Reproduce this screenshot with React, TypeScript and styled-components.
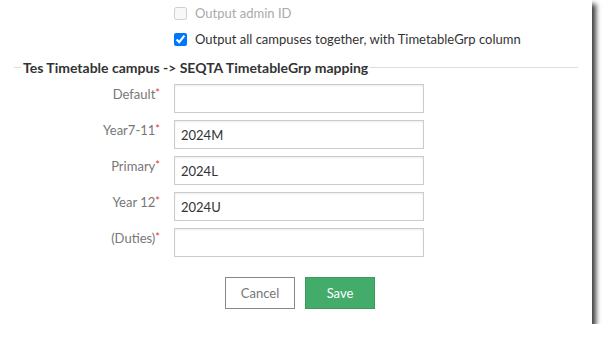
import React from "react";
import styled, { createGlobalStyle } from "styled-components";

const Global = createGlobalStyle`
  html, body { margin: 0; padding: 0; background: #fff; }
  body { font-family: Lato, "Open Sans", sans-serif; }
`;

const Panel = styled.div`
  width: 592px;
  height: 324px;
  background: #fff;
  box-shadow: 4px 4px 5px rgba(0, 0, 0, 0.75);
  box-sizing: border-box;
  padding-top: 4px;
  display: flex;
  flex-direction: column;
`;

const CheckRow = styled.label<{ $disabled?: boolean }>`
  display: flex;
  align-items: center;
  height: 18px;
  margin-bottom: 8px;
  padding-left: 174px;
  font-size: 13px;
  color: ${(p) => (p.$disabled ? "#aaa" : "#333")};
`;

const Box = styled.input`
  width: 13px;
  height: 13px;
  margin: 0 8px 0 0;
  accent-color: #0075ff;
`;

const Legend = styled.div`
  display: flex;
  align-items: center;
  margin: 2px 14px 0 14px;
  height: 18px;
  font-size: 14px;
  font-weight: 700;
  color: #333;
  gap: 2px;
`;

const Rule = styled.span<{ $grow?: boolean }>`
  height: 1px;
  background: #ddd;
  ${(p) => (p.$grow ? "flex: 1;" : "width: 7px;")}
`;

const Form = styled.div`
  display: grid;
  grid-template-columns: 160px 250px;
  column-gap: 14px;
  row-gap: 7px;
  margin-top: 8px;
`;

const Label = styled.div`
  text-align: right;
  font-size: 13px;
  color: #777;
  padding-top: 1px;
  line-height: 18px;
`;

const Star = styled.span`
  color: #e0402e;
  font-size: 11px;
  vertical-align: top;
  position: relative;
  top: -1px;
`;

const Field = styled.input`
  box-sizing: border-box;
  width: 250px;
  height: 29px;
  border: 1px solid #ccc;
  box-shadow: inset 0 1px 2px rgba(0, 0, 0, 0.08);
  padding: 0 6px;
  font-family: Lato, sans-serif;
  font-size: 13px;
  color: #333;
  outline: none;
`;

const Buttons = styled.div`
  display: flex;
  gap: 10px;
  padding-left: 225px;
  margin-top: 20px;
`;

const Button = styled.button<{ $primary?: boolean }>`
  box-sizing: border-box;
  width: 70px;
  height: 32px;
  font-family: Lato, sans-serif;
  font-size: 13px;
  border: 1px solid ${(p) => (p.$primary ? "#3a9a5e" : "#888")};
  background: ${(p) => (p.$primary ? "#43ac6a" : "#fff")};
  color: ${(p) => (p.$primary ? "#fff" : "#777")};
  padding: 0;
`;

const rows = [
  { label: "Default", value: "" },
  { label: "Year7-11", value: "2024M" },
  { label: "Primary", value: "2024L" },
  { label: "Year 12", value: "2024U" },
  { label: "(Duties)", value: "" },
];

export default function App() {
  return (
    <>
      <Global />
      <Panel>
        <CheckRow $disabled>
          <Box type="checkbox" disabled />
          Output admin ID
        </CheckRow>
        <CheckRow>
          <Box type="checkbox" defaultChecked />
          Output all campuses together, with TimetableGrp column
        </CheckRow>
        <Legend>
          <Rule />
          Tes Timetable campus -&gt; SEQTA TimetableGrp mapping
          <Rule $grow />
        </Legend>
        <Form>
          {rows.map((r) => (
            <React.Fragment key={r.label}>
              <Label>
                {r.label}
                <Star>*</Star>
              </Label>
              <Field defaultValue={r.value} />
            </React.Fragment>
          ))}
        </Form>
        <Buttons>
          <Button>Cancel</Button>
          <Button $primary>Save</Button>
        </Buttons>
      </Panel>
    </>
  );
}
